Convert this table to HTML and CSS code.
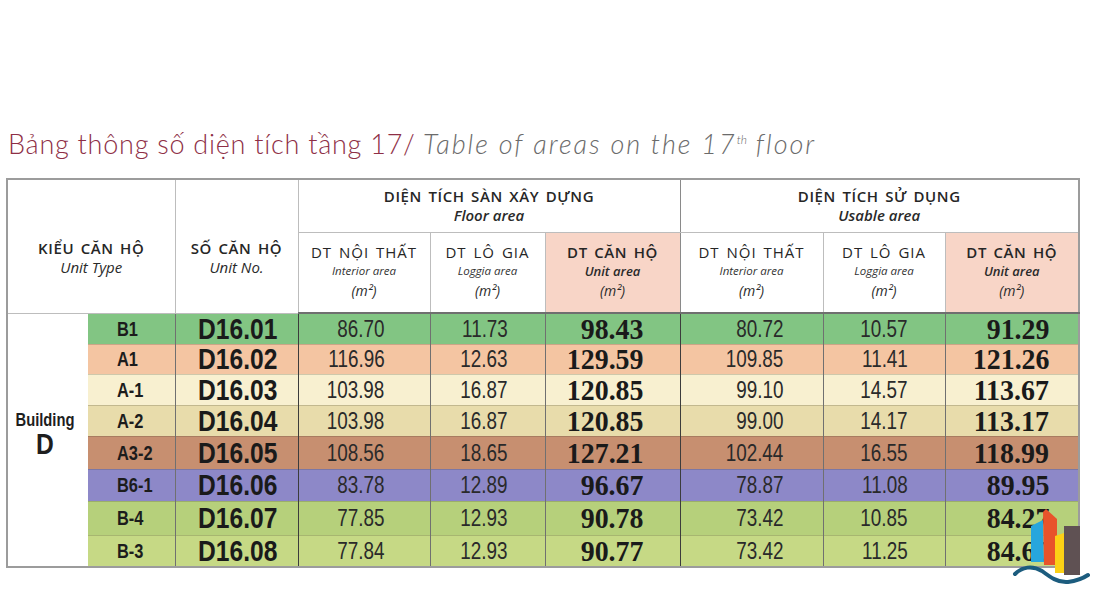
FILE: index.html
```html
<!DOCTYPE html>
<html lang="vi">
<head>
<meta charset="utf-8">
<title>Bảng thông số diện tích tầng 17</title>
<link rel="stylesheet" href="styles.css">
</head>
<body>
<div class="page">
  <h1 class="title"><span class="vn">Bảng thông số diện tích tầng 17/</span> <span class="en">Table of areas on the 17<sup>th</sup> floor</span></h1>
  <table class="areas">
    <colgroup>
      <col class="w-bld"><col class="w-type"><col class="w-no">
      <col class="w-fi"><col class="w-fl"><col class="w-ft">
      <col class="w-ui"><col class="w-ul"><col class="w-ut">
    </colgroup>
    <thead>
      <tr class="hrow1">
        <th colspan="2" rowspan="2" class="h-main h-type"><div class="cap">KIỂU CĂN HỘ</div><div class="it">Unit Type</div></th>
        <th rowspan="2" class="h-main h-type"><div class="cap">SỐ CĂN HỘ</div><div class="it">Unit No.</div></th>
        <th colspan="3" class="h-group sep"><div class="cap">DIỆN TÍCH SÀN XÂY DỰNG</div><div class="it bi">Floor area</div></th>
        <th colspan="3" class="h-group"><div class="cap">DIỆN TÍCH SỬ DỤNG</div><div class="it bi">Usable area</div></th>
      </tr>
      <tr class="hrow2">
        <th class="h-sub"><div class="cap light">DT NỘI THẤT</div><div class="tiny">Interior area</div><div class="unit">(m²)</div></th>
        <th class="h-sub"><div class="cap light">DT LÔ GIA</div><div class="tiny">Loggia area</div><div class="unit">(m²)</div></th>
        <th class="h-sub pink sep"><div class="cap">DT CĂN HỘ</div><div class="bi-sm">Unit area</div><div class="unit">(m²)</div></th>
        <th class="h-sub"><div class="cap light">DT NỘI THẤT</div><div class="tiny">Interior area</div><div class="unit">(m²)</div></th>
        <th class="h-sub"><div class="cap light">DT LÔ GIA</div><div class="tiny">Loggia area</div><div class="unit">(m²)</div></th>
        <th class="h-sub pink"><div class="cap">DT CĂN HỘ</div><div class="bi-sm">Unit area</div><div class="unit">(m²)</div></th>
      </tr>
    </thead>
    <tbody>
      <tr class="r-b1">
        <td rowspan="8" class="bld"><div class="bld-name"><span class="sq">Building</span></div><div class="bld-letter"><span class="sq">D</span></div></td>
        <td class="type"><span class="sq">B1</span></td><td class="no"><span class="sq">D16.01</span></td>
        <td class="num fi"><span class="sq">86.70</span></td><td class="num fl"><span class="sq">11.73</span></td><td class="tot ft"><span class="sq">98.43</span></td>
        <td class="num ui"><span class="sq">80.72</span></td><td class="num ul"><span class="sq">10.57</span></td><td class="tot ut"><span class="sq">91.29</span></td>
      </tr>
      <tr class="r-a1">
        <td class="type"><span class="sq">A1</span></td><td class="no"><span class="sq">D16.02</span></td>
        <td class="num fi"><span class="sq">116.96</span></td><td class="num fl"><span class="sq">12.63</span></td><td class="tot ft"><span class="sq">129.59</span></td>
        <td class="num ui"><span class="sq">109.85</span></td><td class="num ul"><span class="sq">11.41</span></td><td class="tot ut"><span class="sq">121.26</span></td>
      </tr>
      <tr class="r-a-1">
        <td class="type"><span class="sq">A-1</span></td><td class="no"><span class="sq">D16.03</span></td>
        <td class="num fi"><span class="sq">103.98</span></td><td class="num fl"><span class="sq">16.87</span></td><td class="tot ft"><span class="sq">120.85</span></td>
        <td class="num ui"><span class="sq">99.10</span></td><td class="num ul"><span class="sq">14.57</span></td><td class="tot ut"><span class="sq">113.67</span></td>
      </tr>
      <tr class="r-a-2">
        <td class="type"><span class="sq">A-2</span></td><td class="no"><span class="sq">D16.04</span></td>
        <td class="num fi"><span class="sq">103.98</span></td><td class="num fl"><span class="sq">16.87</span></td><td class="tot ft"><span class="sq">120.85</span></td>
        <td class="num ui"><span class="sq">99.00</span></td><td class="num ul"><span class="sq">14.17</span></td><td class="tot ut"><span class="sq">113.17</span></td>
      </tr>
      <tr class="r-a3">
        <td class="type"><span class="sq">A3-2</span></td><td class="no"><span class="sq">D16.05</span></td>
        <td class="num fi"><span class="sq">108.56</span></td><td class="num fl"><span class="sq">18.65</span></td><td class="tot ft"><span class="sq">127.21</span></td>
        <td class="num ui"><span class="sq">102.44</span></td><td class="num ul"><span class="sq">16.55</span></td><td class="tot ut"><span class="sq">118.99</span></td>
      </tr>
      <tr class="r-b6">
        <td class="type"><span class="sq">B6-1</span></td><td class="no"><span class="sq">D16.06</span></td>
        <td class="num fi"><span class="sq">83.78</span></td><td class="num fl"><span class="sq">12.89</span></td><td class="tot ft"><span class="sq">96.67</span></td>
        <td class="num ui"><span class="sq">78.87</span></td><td class="num ul"><span class="sq">11.08</span></td><td class="tot ut"><span class="sq">89.95</span></td>
      </tr>
      <tr class="r-b4">
        <td class="type"><span class="sq">B-4</span></td><td class="no"><span class="sq">D16.07</span></td>
        <td class="num fi"><span class="sq">77.85</span></td><td class="num fl"><span class="sq">12.93</span></td><td class="tot ft"><span class="sq">90.78</span></td>
        <td class="num ui"><span class="sq">73.42</span></td><td class="num ul"><span class="sq">10.85</span></td><td class="tot ut"><span class="sq">84.27</span></td>
      </tr>
      <tr class="r-b3">
        <td class="type"><span class="sq">B-3</span></td><td class="no"><span class="sq">D16.08</span></td>
        <td class="num fi"><span class="sq">77.84</span></td><td class="num fl"><span class="sq">12.93</span></td><td class="tot ft"><span class="sq">90.77</span></td>
        <td class="num ui"><span class="sq">73.42</span></td><td class="num ul"><span class="sq">11.25</span></td><td class="tot ut"><span class="sq">84.60</span></td>
      </tr>
    </tbody>
  </table>
  <svg class="logo" viewBox="0 0 80 80" width="80" height="80" aria-hidden="true">
    <polygon points="21,21 33,15 34,57 21,57" fill="#27a6dd"/>
    <polygon points="33,7 36,4 47,14 47,60 34,60" fill="#e8532b"/>
    <polygon points="45,31 54,28 54,68 45,68" fill="#fcd116"/>
    <polygon points="54,21 70,21 70,70 54,70" fill="#5f5153"/>
    <path d="M5,69 C12,62 22,60 32,66 C40,72 48,78 58,77 C66,76 72,74 78,70" fill="none" stroke="#1c5c7e" stroke-width="4" stroke-linecap="round"/>
  </svg>
</div>
</body>
</html>
```

FILE: styles.css
```css
html, body {
  margin: 0;
  background: #ffffff;
}

.page {
  position: relative;
  width: 1110px;
  height: 596px;
  box-sizing: border-box;
  padding: 124px 0 0 6px;
  overflow: hidden;
}

.title {
  margin: 0 0 14px 2px;
  font-family: Lato, "Open Sans", sans-serif;
  font-weight: 300;
  font-size: 27px;
  line-height: 40px;
  white-space: nowrap;
}

.title .vn {
  color: #8e2f46;
  letter-spacing: 0.75px;
}

.title .en {
  color: #6b6b6b;
  font-style: italic;
  letter-spacing: 2px;
}

.title sup {
  font-size: 12px;
  letter-spacing: 0;
  line-height: 0;
  vertical-align: 10px;
}

.areas {
  border-collapse: collapse;
  table-layout: fixed;
  width: 1072px;
  border: 2px solid #9c9c9c;
  font-family: "Open Sans", "Noto Sans", sans-serif;
  color: #222222;
}

.w-bld { width: 81px; }
.w-type { width: 87px; }
.w-no { width: 123px; }
.w-fi { width: 132px; }
.w-fl { width: 115px; }
.w-ft { width: 135px; }
.w-ui { width: 143px; }
.w-ul { width: 122px; }
.w-ut { width: 134px; }

.areas th {
  border: 1px solid #bdbdbd;
  padding: 0;
  font-weight: normal;
  vertical-align: middle;
  text-align: center;
}

.hrow1 { height: 53px; }
.hrow2 { height: 81px; }

.h-type {
  padding-top: 22px !important;
}

.cap {
  font-size: 15px;
  line-height: 19px;
  font-weight: 600;
  letter-spacing: 0.6px;
  word-spacing: 2px;
  color: #262626;
}

.cap.light {
  font-weight: 400;
  letter-spacing: 1px;
}

.it {
  font-size: 15px;
  line-height: 18px;
  font-style: italic;
  color: #2a2a2a;
}

.bi {
  font-weight: 600;
}

.tiny {
  font-size: 11.5px;
  line-height: 18px;
  font-style: italic;
  color: #333333;
}

.bi-sm {
  font-size: 13px;
  line-height: 18px;
  font-style: italic;
  font-weight: 600;
  color: #2a2a2a;
}

.unit {
  font-size: 14px;
  line-height: 22px;
  font-style: italic;
  color: #2a2a2a;
}

.pink {
  background: #f8d5c7;
}

.areas th.sep {
  border-right: 1px solid #8a8a8a;
}

.areas thead tr.hrow2 th {
  border-bottom: 2px solid #6f6f6f;
}

.areas td {
  padding: 0;
  border-left: 1px solid #707070;
  border-right: 1px solid #707070;
  border-top: 1px solid rgba(60, 60, 40, 0.22);
  line-height: 24px;
  white-space: nowrap;
  vertical-align: middle;
  font-family: "Liberation Sans", Arial, sans-serif;
}

.sq {
  display: inline-block;
  transform: scaleX(0.82);
  transform-origin: right center;
}

.r-b1 { height: 31px; background: #82c583; }
.r-a1 { height: 30px; background: #f4c5a2; }
.r-a-1 { height: 31px; background: #f8f0d0; }
.r-a-2 { height: 31px; background: #e8dcab; }
.r-a3 { height: 33px; background: #c78f70; }
.r-b6 { height: 32px; background: #8d88c8; }
.r-b4 { height: 34px; background: #b6d07b; }
.r-b3 { height: 32px; background: #c6d985; }

.areas td.bld {
  background: #ffffff;
  border-left: 2px solid #9c9c9c;
  text-align: center;
  padding-bottom: 12px;
  padding-right: 6px;
  color: #1e1e1e;
}

.bld .sq {
  transform-origin: center center;
}

.bld-name {
  font-size: 18px;
  font-weight: bold;
  line-height: 20px;
}

.bld-letter {
  font-size: 30px;
  font-weight: bold;
  line-height: 28px;
}

.areas td.type {
  border-left: hidden;
  font-weight: bold;
  font-size: 20px;
  text-align: left;
  padding-left: 29px;
  color: #1c1c1c;
}

.type .sq,
.no .sq {
  transform-origin: left center;
}

.areas td.no {
  font-weight: bold;
  font-size: 30px;
  text-align: left;
  padding-left: 22px;
  color: #1a1a1a;
  border-right: 1px solid #3c3c3c;
}

.num {
  font-size: 23px;
  text-align: right;
  color: #2a2a2a;
}

.areas td.tot {
  font-family: "Liberation Serif", "Times New Roman", serif;
  font-weight: bold;
  font-size: 30px;
  text-align: right;
  color: #1a1a1a;
}

.tot .sq {
  transform: scaleX(0.93);
}

.areas td.fi { padding-right: 45px; }
.areas td.fl { padding-right: 37px; }
.areas td.ft { padding-right: 36px; border-right: 1px solid #3c3c3c; }
.areas td.ui { padding-right: 39px; }
.areas td.ul { padding-right: 37px; }
.areas td.ut { padding-right: 29px; border-right: 2px solid #9c9c9c; }

.logo {
  position: absolute;
  left: 1010px;
  top: 505px;
}
```
